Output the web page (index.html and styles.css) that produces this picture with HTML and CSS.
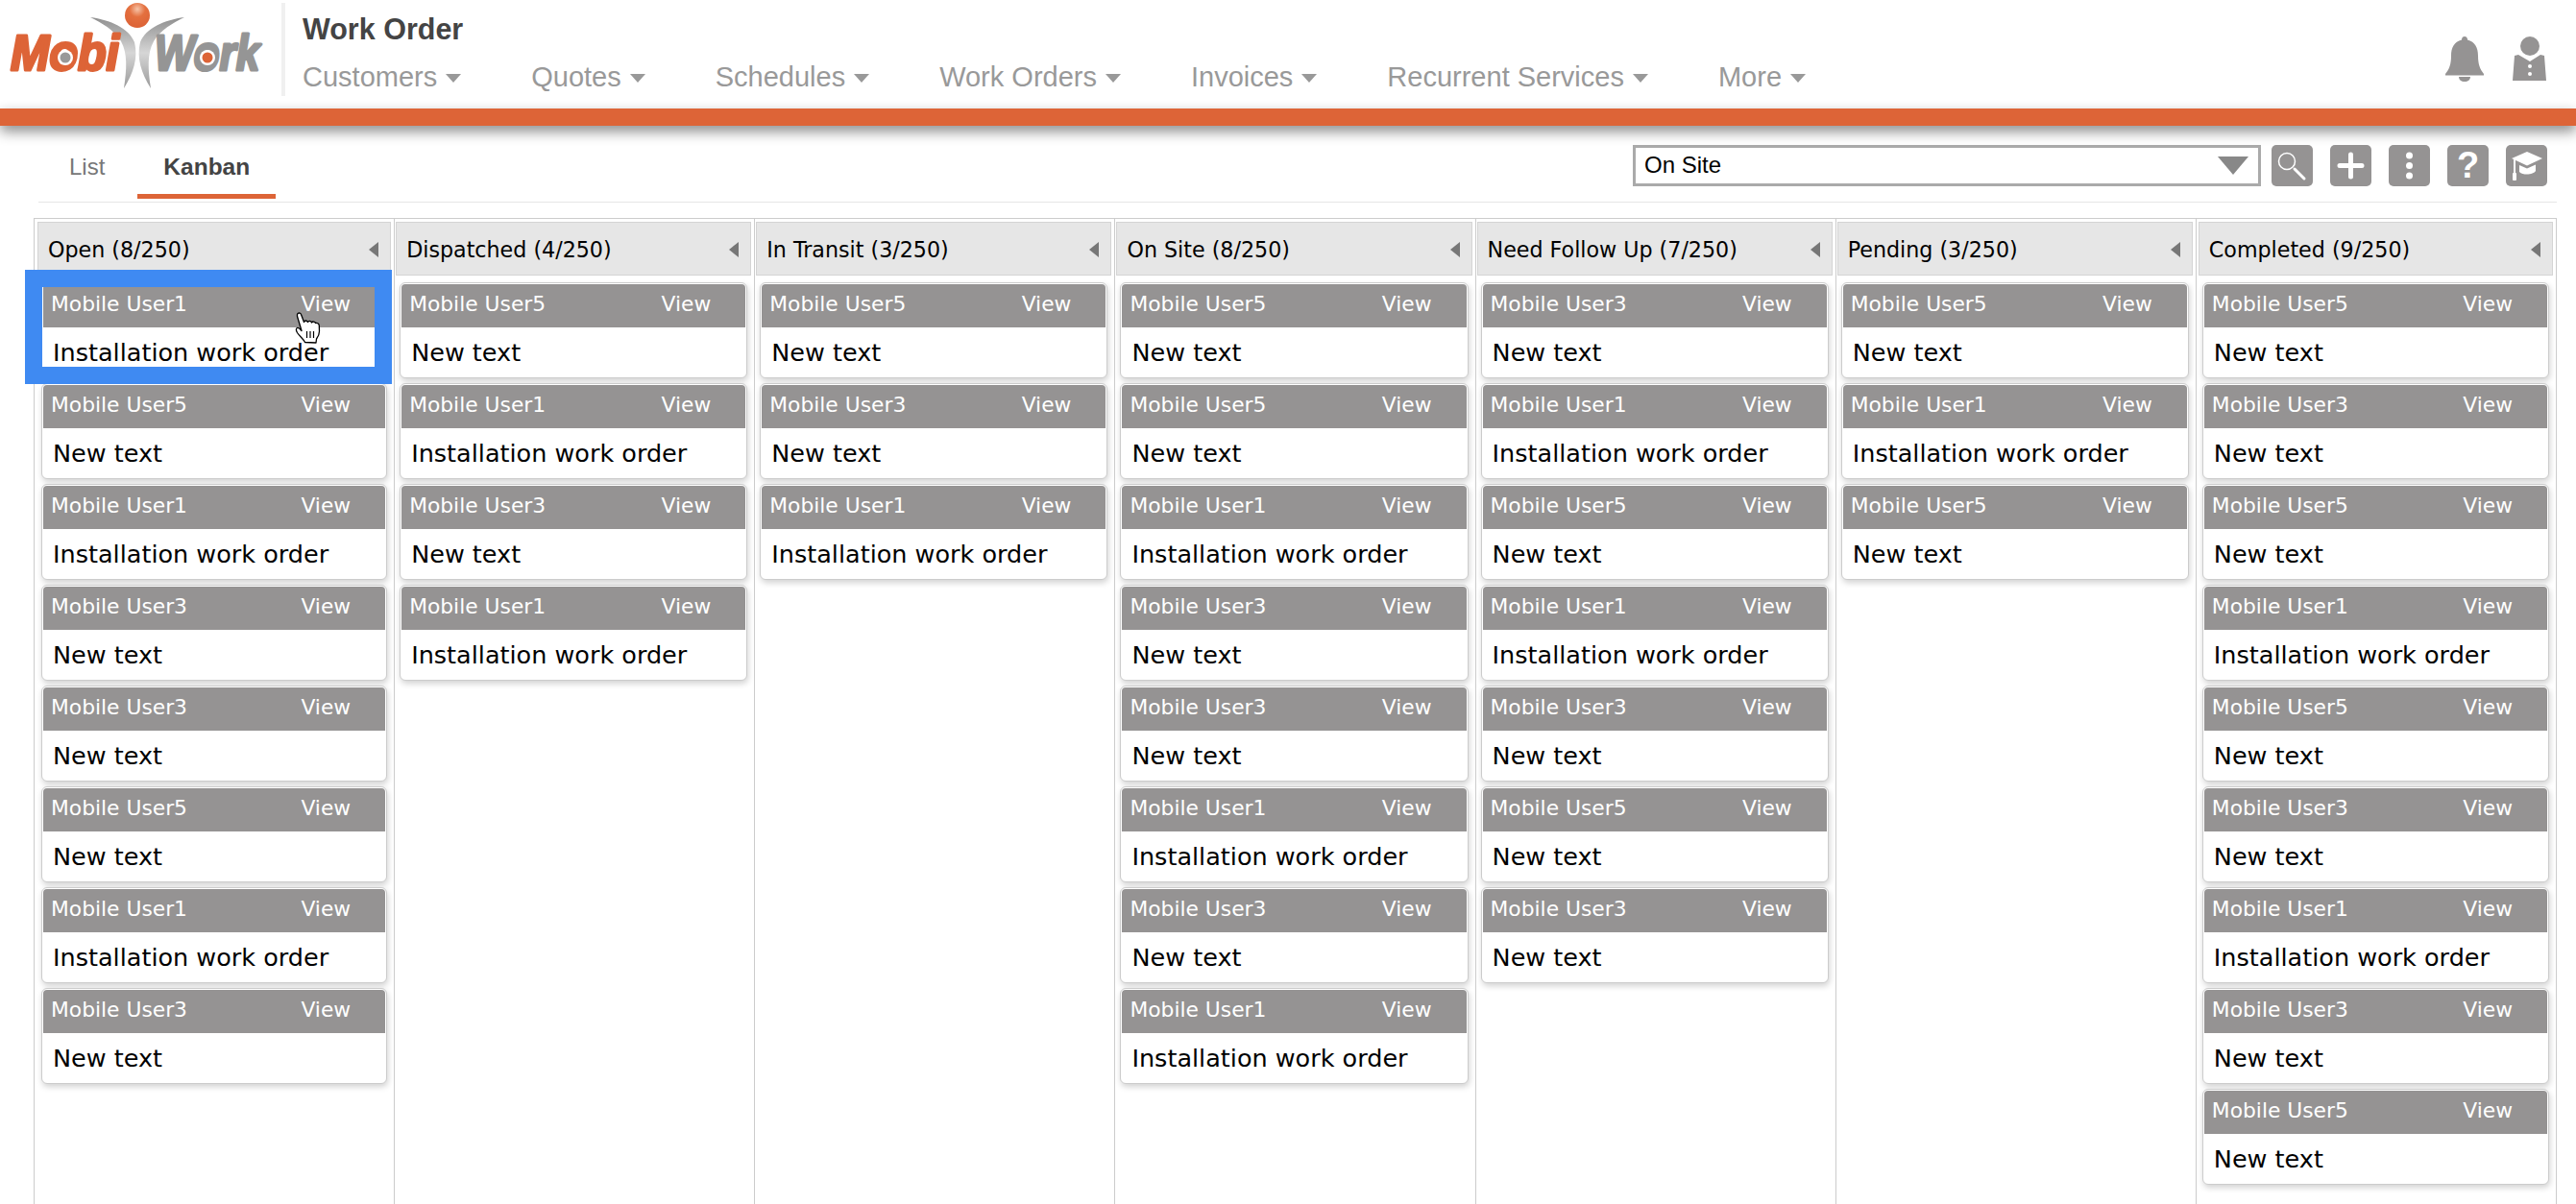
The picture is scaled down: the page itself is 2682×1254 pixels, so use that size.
FILE: index.html
```html
<!DOCTYPE html>
<html lang="en">
<head>
    <meta charset="UTF-8">
    <title>Work Order</title>
    <link rel="stylesheet" href="styles.css">
</head>
<body>
    <header class="topbar">
        <svg class="logo" viewBox="0 0 293 105" width="293" height="105">
            <defs>
                <linearGradient id="armGrad" x1="0" y1="0" x2="0" y2="1">
                    <stop offset="0" stop-color="#8f8f8f"/>
                    <stop offset="0.5" stop-color="#d6d6d6"/>
                    <stop offset="1" stop-color="#9a9a9a"/>
                </linearGradient>
                <radialGradient id="ballGrad" cx="0.5" cy="0.25" r="0.7">
                    <stop offset="0" stop-color="#f6c4a8"/>
                    <stop offset="0.45" stop-color="#e4703f"/>
                    <stop offset="1" stop-color="#dd6437"/>
                </radialGradient>
            </defs>
            <path fill="url(#armGrad)" d="M94 18C115 21 134 29 140 44C144 60 139 76 129 92C132 72 133 56 126 43C119 31 106 24 94 18Z"/>
            <path fill="url(#armGrad)" d="M192 18C171 21 152 29 146 44C142 60 147 76 157 92C154 72 153 56 160 43C167 31 180 24 192 18Z"/>
            <circle cx="143" cy="16" r="13" fill="url(#ballGrad)"/>
            <text class="logo-word logo-mobi" transform="translate(11 73) scale(.97 1.02)">Mobi</text>
            <circle cx="68" cy="60" r="8" fill="#fff"/>
            <circle cx="68" cy="60" r="5.500" fill="#999"/>
            <text class="logo-word logo-work" transform="translate(161 73) scale(.88 1.02)">Work</text>
            <circle cx="216" cy="60" r="8" fill="#fff"/>
            <circle cx="216" cy="60" r="5.500" fill="#dd6437"/>
        </svg>
        <div class="title-block">
            <div class="page-title">Work Order</div>
            <nav class="main-nav">
                <a class="nav-item">Customers</a>
                <a class="nav-item">Quotes</a>
                <a class="nav-item">Schedules</a>
                <a class="nav-item">Work Orders</a>
                <a class="nav-item">Invoices</a>
                <a class="nav-item">Recurrent Services</a>
                <a class="nav-item">More</a>
            </nav>
        </div>
        <div class="user-icons">
            <svg viewBox="0 0 40 47" width="40" height="47">
                <path fill="#959393" d="M20 0C22 0 23 1.500 23 3.500C31 5.500 34 12 34 20C34 29 36 34 40 39L40 40.500L0 40.500L0 39C4 34 6 29 6 20C6 12 9 5.500 17 3.500C17 1.500 18 0 20 0Z"/>
                <path fill="#959393" d="M14 42L26 42C26 45 23.500 47 20 47C16.500 47 14 45 14 42Z"/>
            </svg>
            <svg viewBox="0 0 35 46" width="35" height="46">
                <circle cx="18" cy="10" r="10" fill="#959393"/>
                <path fill="#959393" d="M6 19L18 26L29 19L33 20L35 46L0 46L2 20Z"/>
                <circle cx="18" cy="31" r="2" fill="#fff"/>
                <circle cx="18" cy="39" r="2" fill="#fff"/>
            </svg>
        </div>
    </header>
    <div class="orange-bar"></div>

    <div class="toolbar">
        <div class="tabs">
            <a class="tab">List</a>
            <a class="tab tab-active">Kanban</a>
        </div>
        <div class="tools">
            <div class="select-box">
                <span>On Site</span>
                <span class="select-arrow"></span>
            </div>
            <button class="tool-btn">
                <svg viewBox="0 0 43 43" width="43" height="43">
                    <circle cx="16" cy="17" r="8.500" fill="none" stroke="#fff" stroke-width="1.500"/>
                    <path d="M24 25L34 35" stroke="#fff" stroke-width="3" stroke-linecap="round"/>
                </svg>
            </button>
            <button class="tool-btn">
                <svg viewBox="0 0 43 43" width="43" height="43">
                    <path d="M10 21.500H33M21.500 10V33" stroke="#fff" stroke-width="5" stroke-linecap="round"/>
                </svg>
            </button>
            <button class="tool-btn">
                <svg viewBox="0 0 43 43" width="43" height="43">
                    <circle cx="21.500" cy="11" r="3.500" fill="#fff"/>
                    <circle cx="21.500" cy="21.500" r="3.500" fill="#fff"/>
                    <circle cx="21.500" cy="32" r="3.500" fill="#fff"/>
                </svg>
            </button>
            <button class="tool-btn tool-help">?</button>
            <button class="tool-btn">
                <svg viewBox="0 0 43 43" width="43" height="43">
                    <path fill="#fff" d="M22 7L38 14L22 21.500L6 14Z"/>
                    <path fill="#fff" d="M14 21L22 24.500L31 20.500V27C29 31 18 32 14 28Z"/>
                    <path d="M9 15V30" stroke="#fff" stroke-width="2"/>
                    <rect x="7" y="29" width="4" height="8" rx="1" fill="#fff"/>
                </svg>
            </button>
        </div>
    </div>

    <main class="board">
        <section class="column">
            <div class="column-head"><span>Open (8/250)</span><i class="collapse"></i></div>
            <div class="card"><div class="card-head"><span>Mobile User1</span><span>View</span></div><div class="card-body">Installation work order</div></div>
            <div class="card"><div class="card-head"><span>Mobile User5</span><span>View</span></div><div class="card-body">New text</div></div>
            <div class="card"><div class="card-head"><span>Mobile User1</span><span>View</span></div><div class="card-body">Installation work order</div></div>
            <div class="card"><div class="card-head"><span>Mobile User3</span><span>View</span></div><div class="card-body">New text</div></div>
            <div class="card"><div class="card-head"><span>Mobile User3</span><span>View</span></div><div class="card-body">New text</div></div>
            <div class="card"><div class="card-head"><span>Mobile User5</span><span>View</span></div><div class="card-body">New text</div></div>
            <div class="card"><div class="card-head"><span>Mobile User1</span><span>View</span></div><div class="card-body">Installation work order</div></div>
            <div class="card"><div class="card-head"><span>Mobile User3</span><span>View</span></div><div class="card-body">New text</div></div>
        </section>
        <section class="column">
            <div class="column-head"><span>Dispatched (4/250)</span><i class="collapse"></i></div>
            <div class="card"><div class="card-head"><span>Mobile User5</span><span>View</span></div><div class="card-body">New text</div></div>
            <div class="card"><div class="card-head"><span>Mobile User1</span><span>View</span></div><div class="card-body">Installation work order</div></div>
            <div class="card"><div class="card-head"><span>Mobile User3</span><span>View</span></div><div class="card-body">New text</div></div>
            <div class="card"><div class="card-head"><span>Mobile User1</span><span>View</span></div><div class="card-body">Installation work order</div></div>
        </section>
        <section class="column">
            <div class="column-head"><span>In Transit (3/250)</span><i class="collapse"></i></div>
            <div class="card"><div class="card-head"><span>Mobile User5</span><span>View</span></div><div class="card-body">New text</div></div>
            <div class="card"><div class="card-head"><span>Mobile User3</span><span>View</span></div><div class="card-body">New text</div></div>
            <div class="card"><div class="card-head"><span>Mobile User1</span><span>View</span></div><div class="card-body">Installation work order</div></div>
        </section>
        <section class="column">
            <div class="column-head"><span>On Site (8/250)</span><i class="collapse"></i></div>
            <div class="card"><div class="card-head"><span>Mobile User5</span><span>View</span></div><div class="card-body">New text</div></div>
            <div class="card"><div class="card-head"><span>Mobile User5</span><span>View</span></div><div class="card-body">New text</div></div>
            <div class="card"><div class="card-head"><span>Mobile User1</span><span>View</span></div><div class="card-body">Installation work order</div></div>
            <div class="card"><div class="card-head"><span>Mobile User3</span><span>View</span></div><div class="card-body">New text</div></div>
            <div class="card"><div class="card-head"><span>Mobile User3</span><span>View</span></div><div class="card-body">New text</div></div>
            <div class="card"><div class="card-head"><span>Mobile User1</span><span>View</span></div><div class="card-body">Installation work order</div></div>
            <div class="card"><div class="card-head"><span>Mobile User3</span><span>View</span></div><div class="card-body">New text</div></div>
            <div class="card"><div class="card-head"><span>Mobile User1</span><span>View</span></div><div class="card-body">Installation work order</div></div>
        </section>
        <section class="column">
            <div class="column-head"><span>Need Follow Up (7/250)</span><i class="collapse"></i></div>
            <div class="card"><div class="card-head"><span>Mobile User3</span><span>View</span></div><div class="card-body">New text</div></div>
            <div class="card"><div class="card-head"><span>Mobile User1</span><span>View</span></div><div class="card-body">Installation work order</div></div>
            <div class="card"><div class="card-head"><span>Mobile User5</span><span>View</span></div><div class="card-body">New text</div></div>
            <div class="card"><div class="card-head"><span>Mobile User1</span><span>View</span></div><div class="card-body">Installation work order</div></div>
            <div class="card"><div class="card-head"><span>Mobile User3</span><span>View</span></div><div class="card-body">New text</div></div>
            <div class="card"><div class="card-head"><span>Mobile User5</span><span>View</span></div><div class="card-body">New text</div></div>
            <div class="card"><div class="card-head"><span>Mobile User3</span><span>View</span></div><div class="card-body">New text</div></div>
        </section>
        <section class="column">
            <div class="column-head"><span>Pending (3/250)</span><i class="collapse"></i></div>
            <div class="card"><div class="card-head"><span>Mobile User5</span><span>View</span></div><div class="card-body">New text</div></div>
            <div class="card"><div class="card-head"><span>Mobile User1</span><span>View</span></div><div class="card-body">Installation work order</div></div>
            <div class="card"><div class="card-head"><span>Mobile User5</span><span>View</span></div><div class="card-body">New text</div></div>
        </section>
        <section class="column">
            <div class="column-head"><span>Completed (9/250)</span><i class="collapse"></i></div>
            <div class="card"><div class="card-head"><span>Mobile User5</span><span>View</span></div><div class="card-body">New text</div></div>
            <div class="card"><div class="card-head"><span>Mobile User3</span><span>View</span></div><div class="card-body">New text</div></div>
            <div class="card"><div class="card-head"><span>Mobile User5</span><span>View</span></div><div class="card-body">New text</div></div>
            <div class="card"><div class="card-head"><span>Mobile User1</span><span>View</span></div><div class="card-body">Installation work order</div></div>
            <div class="card"><div class="card-head"><span>Mobile User5</span><span>View</span></div><div class="card-body">New text</div></div>
            <div class="card"><div class="card-head"><span>Mobile User3</span><span>View</span></div><div class="card-body">New text</div></div>
            <div class="card"><div class="card-head"><span>Mobile User1</span><span>View</span></div><div class="card-body">Installation work order</div></div>
            <div class="card"><div class="card-head"><span>Mobile User3</span><span>View</span></div><div class="card-body">New text</div></div>
            <div class="card"><div class="card-head"><span>Mobile User5</span><span>View</span></div><div class="card-body">New text</div></div>
        </section>
    </main>

    <div class="drag-frame"></div>
    <svg class="hand-cursor" viewBox="0 0 27 33" width="27" height="33">
        <path fill="#fff" stroke="#000" stroke-width="1.300" stroke-linejoin="round" d="M3 1.500C4.500 .5 6 1 6.500 2.500L9.500 10.500C10 8.500 12.500 8.500 13.500 10.500C14 8.800 16.800 9 17.500 11C18.300 9.500 21 9.800 21.500 11.500C23 11 25 12 25.300 14L25.500 20C25.500 24 24 26 22.500 28L22 32L10.500 31.500C9 28 5.500 26 2.500 21.500C1 19 1 17 2.500 16.500C4 16 5.500 17.500 7 19.500L2.500 4.500C2.300 3.300 2.300 2.200 3 1.500Z"/>
        <path stroke="#000" stroke-width="1.200" d="M12.500 20V27M16 20V27M19.500 20V27"/>
    </svg>
</body>
</html>
```

FILE: styles.css
```css
html, body {
    margin: 0;
    height: 100%;
    overflow: hidden;
}
body {
    display: flex;
    flex-direction: column;
    position: relative;
    background-color: #fff;
    font-family: "Liberation Sans", Arial, sans-serif;
}

/* top header */
.topbar {
    display: flex;
    height: 113px;
    flex-shrink: 0;
}
.logo {
    flex-shrink: 0;
}
.logo-word {
    font-family: "Liberation Sans", Arial, sans-serif;
    font-size: 50px;
    font-weight: bold;
    font-style: italic;
    stroke-width: 3px;
    stroke-linejoin: round;
}
.logo-mobi {
    fill: #dd6437;
    stroke: #dd6437;
}
.logo-work {
    fill: #959595;
    stroke: #959595;
}
.title-block {
    height: 97px;
    margin-top: 3px;
    padding-left: 18px;
    border-left: 4px solid #f0f0f0;
}
.page-title {
    margin-top: 9px;
    font-size: 30.500px;
    font-weight: bold;
    line-height: 36px;
    color: #444;
}
.main-nav {
    display: flex;
    gap: 73px;
    margin-top: 14px;
}
.nav-item {
    display: flex;
    align-items: center;
    gap: 9px;
    font-size: 29px;
    line-height: 36px;
    color: #999;
}
.nav-item::after {
    content: "";
    width: 0;
    height: 0;
    margin-top: 2px;
    border-left: 8px solid transparent;
    border-right: 8px solid transparent;
    border-top: 9px solid #999;
}
.user-icons {
    display: flex;
    align-items: flex-start;
    gap: 30px;
    margin-left: auto;
    padding: 38px 31px 0 0;
}
.orange-bar {
    height: 18px;
    flex-shrink: 0;
    background-color: #dd6437;
    box-shadow: 0 6px 14px rgba(0,0,0,0.45);
    position: relative;
}

/* tabs and tools */
.toolbar {
    display: flex;
    justify-content: space-between;
    height: 79px;
    flex-shrink: 0;
    margin: 0 20px 0 40px;
    border-bottom: 1px solid #e6e6e6;
}
.tabs {
    display: flex;
    gap: 7px;
    padding-left: 5px;
}
.tab {
    height: 76px;
    padding: 0 27px;
    box-sizing: border-box;
    font-size: 24px;
    line-height: 86px;
    color: #777;
}
.tab-active {
    border-bottom: 5px solid #dd6437;
    font-size: 24.500px;
    font-weight: bold;
    color: #444;
}
.tools {
    display: flex;
    gap: 18px;
    padding: 20px 10px 0 0;
}
.select-box {
    display: flex;
    align-items: center;
    justify-content: space-between;
    width: 654px;
    height: 43px;
    margin-right: -7px;
    padding: 0 10px 2px 9px;
    box-sizing: border-box;
    border: 3px solid #aaa;
    font-size: 24px;
    color: #000;
}
.select-arrow {
    width: 0;
    height: 0;
    margin-top: 2px;
    border-left: 16px solid transparent;
    border-right: 16px solid transparent;
    border-top: 19px solid #888;
}
.tool-btn {
    width: 43px;
    height: 43px;
    padding: 0;
    border: none;
    border-radius: 5px;
    background-color: #959393;
    font-family: "Liberation Sans", Arial, sans-serif;
}
.tool-btn svg {
    display: block;
}
.tool-help {
    font-size: 38px;
    font-weight: bold;
    line-height: 43px;
    color: #fff;
}

/* kanban board */
.board {
    display: grid;
    grid-template-columns: repeat(7, 1fr);
    flex: 1;
    margin: 16px 20px 0 35px;
    border-top: 1px solid #ccc;
    border-right: 1px solid #ccc;
}
.column {
    padding: 3px 3px 0;
    border-left: 1px solid #ccc;
    font-family: "DejaVu Sans", Verdana, sans-serif;
}
.column + .column {
    padding-left: 1px;
}
.column:last-child {
    padding-left: 2px;
}
.column-head {
    display: flex;
    align-items: center;
    justify-content: space-between;
    height: 56px;
    margin-bottom: 7px;
    padding: 2px 12px 0 10px;
    box-sizing: border-box;
    border: 1px solid #d4d4d4;
    background-color: #e6e6e6;
    font-size: 22.200px;
    color: #000;
}
.collapse {
    width: 0;
    height: 0;
    border-top: 8px solid transparent;
    border-bottom: 8px solid transparent;
    border-right: 10px solid #777;
}
.card {
    height: 100px;
    margin: 0 4px 5px;
    padding: 1px;
    box-sizing: border-box;
    border: 1px solid #ccc;
    border-radius: 6px;
    background-color: #fff;
    box-shadow: 1px 3px 6px rgba(0,0,0,0.18);
}
.card-head {
    display: flex;
    justify-content: space-between;
    align-items: center;
    height: 45px;
    padding: 0 36px 4px 8px;
    box-sizing: border-box;
    border-radius: 4px 4px 0 0;
    background-color: #959393;
    font-size: 21.800px;
    color: #fff;
}
.card-body {
    height: 51px;
    padding-left: 10px;
    font-size: 25.500px;
    line-height: 52px;
    color: #000;
}

/* card being dragged */
.drag-frame {
    position: absolute;
    left: 26px;
    top: 281px;
    width: 382px;
    height: 119px;
    box-sizing: border-box;
    border: 18px solid #3f8af2;
}
.hand-cursor {
    position: absolute;
    left: 307px;
    top: 325px;
}
```
